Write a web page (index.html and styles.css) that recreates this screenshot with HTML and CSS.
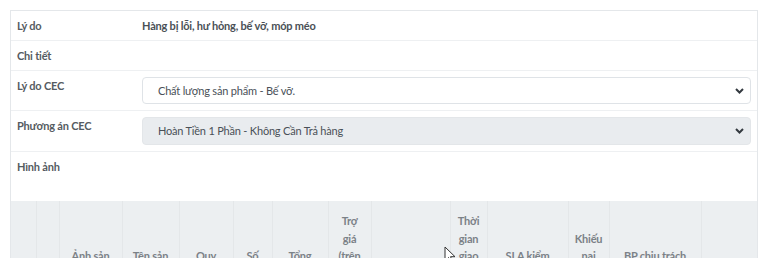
FILE: index.html
```html
<!DOCTYPE html>
<html lang="vi">
<head>
    <meta charset="UTF-8">
    <meta name="viewport" content="width=device-width, initial-scale=1.0">
    <title>Chi tiết khiếu nại</title>
    <link rel="stylesheet" href="styles.css">
</head>
<body>
    <div class="card">
        <div class="row">
            <div class="label">Lý do</div>
            <div class="value strong">Hàng bị lỗi, hư hỏng, bế vỡ, móp méo</div>
        </div>
        <div class="row">
            <div class="label">Chi tiết</div>
            <div class="value"></div>
        </div>
        <div class="row">
            <div class="label">Lý do CEC</div>
            <div class="value">
                <div class="select">
                    <span>Chất lượng sản phẩm - Bế vỡ.</span>
                    <svg class="chev" width="9" height="6" viewBox="0 0 9 6"><path d="M1 1l3.5 3.5L8 1" fill="none" stroke="#343a40" stroke-width="2"/></svg>
                </div>
            </div>
        </div>
        <div class="row">
            <div class="label">Phương án CEC</div>
            <div class="value">
                <div class="select disabled">
                    <span>Hoàn Tiền 1 Phần - Không Cần Trả hàng</span>
                    <svg class="chev" width="9" height="6" viewBox="0 0 9 6"><path d="M1 1l3.5 3.5L8 1" fill="none" stroke="#343a40" stroke-width="2"/></svg>
                </div>
            </div>
        </div>
        <div class="row images">
            <div class="label">Hình ảnh</div>
            <div class="value"></div>
        </div>

        <table class="items">
            <colgroup>
                <col style="width:25px"><col style="width:23px"><col style="width:63px"><col style="width:57px">
                <col style="width:54px"><col style="width:39px"><col style="width:56px"><col style="width:43px">
                <col style="width:79px"><col style="width:37px"><col style="width:81px"><col style="width:41px">
                <col style="width:92px"><col style="width:56px">
            </colgroup>
            <thead>
                <tr>
                    <th></th>
                    <th>#</th>
                    <th>Ảnh sản<br>phẩm</th>
                    <th>Tên sản<br>phẩm</th>
                    <th>Quy<br>cách</th>
                    <th>Số<br>lượng</th>
                    <th>Tổng<br>tiền</th>
                    <th>Trợ<br>giá<br>(trên<br>sàn)</th>
                    <th>Mã vận đơn</th>
                    <th>Thời<br>gian<br>giao<br>hàng</th>
                    <th>SLA kiểm<br>tra</th>
                    <th>Khiếu<br>nại<br>lần</th>
                    <th>BP chịu trách<br>nhiệm</th>
                    <th>Thao tác</th>
                </tr>
            </thead>
        </table>
    </div>

    <svg class="cursor" width="12" height="18" viewBox="0 0 12 18">
        <path d="M1 1v14l3.5-3.5 2.5 5.5 2-1-2.5-5.3H11z" fill="#fff" stroke="#333" stroke-width="1"/>
    </svg>
</body>
</html>
```

FILE: styles.css
```css
body {
    margin: 0;
    padding: 10px 10px 0;
    background: #fff;
    font-family: 'Lato', 'Open Sans', sans-serif;
    font-size: 11px;
    letter-spacing: -0.2px;
    color: #4f555b;
    overflow: hidden;
}

.card {
    border: 1px solid #e4e7ea;
    border-bottom: none;
}

.row {
    display: flex;
    padding: 6px 6px 5px;
    border-bottom: 1px solid #eef0f2;
    line-height: 18px;
}

.row .label {
    width: 125px;
    flex-shrink: 0;
    font-weight: bold;
    color: #555b61;
}

.row .value {
    flex: 1;
    min-height: 18px;
}

.row .value.strong {
    font-weight: bold;
    color: #4a5056;
}

.row:nth-child(3),
.row:nth-child(4) {
    padding-bottom: 6px;
}

.row.images {
    min-height: 38px;
    border-bottom: none;
}

.select {
    display: flex;
    align-items: center;
    justify-content: space-between;
    height: 25px;
    padding: 0 6px 0 15px;
    border: 1px solid #dfe3e7;
    border-radius: 4px;
    background: #fff;
    color: #495057;
}

.select.disabled {
    height: 26px;
    background: #e9ecef;
    border-color: #e3e6e9;
}

.items {
    width: 100%;
    border-collapse: collapse;
    table-layout: fixed;
    background: #eceff1;
}

.items th {
    vertical-align: bottom;
    text-align: center;
    padding: 11px 2px 8px;
    font-weight: bold;
    line-height: 17.5px;
    color: #7b8187;
    border-left: 1px solid #e4e7e9;
    white-space: nowrap;
}

.items th:first-child {
    border-left: none;
}

.cursor {
    position: absolute;
    left: 444px;
    top: 246px;
}
```
